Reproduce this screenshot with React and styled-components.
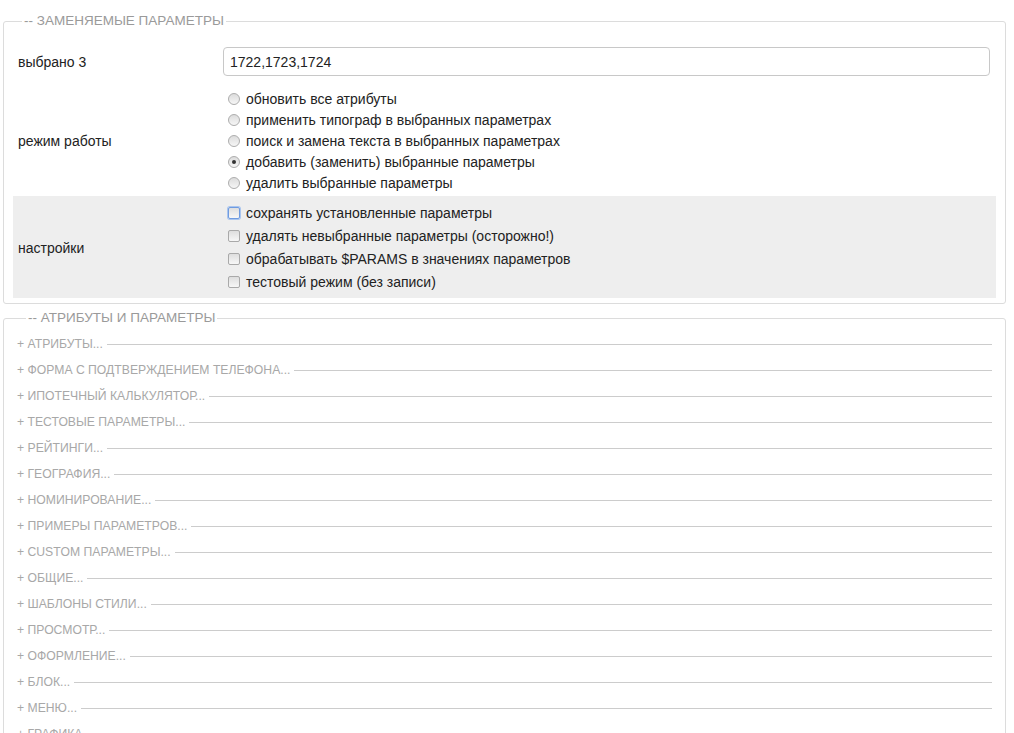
import React from 'react';
import styled, { createGlobalStyle } from 'styled-components';

const Global = createGlobalStyle`
  html, body { margin: 0; padding: 0; background: #fff; }
  body {
    font-family: "Liberation Sans", Arial, sans-serif;
    font-size: 14px;
    color: #222;
  }
`;

const Page = styled.div`
  padding: 13px 8px 0 3px;
  display: flex;
  flex-direction: column;
  gap: 6px;
`;

const Fieldset = styled.fieldset`
  margin: 0;
  border: 1px solid #dcdcdc;
  border-radius: 3px;
  padding: ${p => p.$pad};
  min-width: 0;
`;

const Legend = styled.legend`
  margin-left: 9px;
  padding: 0 2px;
  font-size: 13.5px;
  line-height: 16px;
  color: #9a9a9a;
  text-transform: uppercase;
`;

const Row = styled.div`
  display: grid;
  grid-template-columns: 210px 1fr;
  align-items: center;
  padding: ${p => p.$pad || '0'};
  background: ${p => (p.$shaded ? '#eeeeee' : 'transparent')};
`;

const Label = styled.div`
  padding-left: 5px;
`;

const TextInput = styled.input`
  box-sizing: border-box;
  width: 100%;
  height: 29px;
  border: 1px solid #c8c8c8;
  border-radius: 4px;
  padding: 0 6px;
  font: inherit;
  font-size: 14px;
  color: #222;
  outline: none;
`;

const OptionList = styled.div`
  display: flex;
  flex-direction: column;
  gap: ${p => p.$gap};
  padding-left: 5px;
`;

const Option = styled.label`
  display: flex;
  align-items: center;
  gap: 6px;
  line-height: 16px;
`;

const Radio = styled.span`
  box-sizing: border-box;
  width: 12px;
  height: 12px;
  border-radius: 50%;
  border: 1px solid #adadad;
  background: linear-gradient(#dcdcdc, #f6f6f6);
  display: flex;
  align-items: center;
  justify-content: center;
  flex: none;
  &::after {
    content: '';
    width: 4px;
    height: 4px;
    border-radius: 50%;
    background: #333;
    display: ${p => (p.$on ? 'block' : 'none')};
  }
`;

const Check = styled.span`
  box-sizing: border-box;
  width: 12px;
  height: 12px;
  border-radius: 2px;
  border: 1px solid ${p => (p.$focus ? '#6f9be0' : '#a9a9a9')};
  box-shadow: ${p => (p.$focus ? '0 0 0 1px #a9c5ef' : 'none')};
  background: linear-gradient(#dedede, #f7f7f7);
  flex: none;
`;

const Groups = styled.div`
  display: flex;
  flex-direction: column;
  padding-top: 5px;
`;

const Group = styled.div`
  height: 26px;
  display: flex;
  align-items: center;
  font-size: 12.2px;
  color: #a8a8a8;
  text-transform: uppercase;
  white-space: nowrap;
  &::after {
    content: '';
    flex: 1;
    margin-left: 4px;
    border-top: 1px solid #cccccc;
  }
`;

const modes = [
  'обновить все атрибуты',
  'применить типограф в выбранных параметрах',
  'поиск и замена текста в выбранных параметрах',
  'добавить (заменить) выбранные параметры',
  'удалить выбранные параметры',
];

const settings = [
  'сохранять установленные параметры',
  'удалять невыбранные параметры (осторожно!)',
  'обрабатывать $PARAMS в значениях параметров',
  'тестовый режим (без записи)',
];

const groups = [
  'атрибуты', 'форма с подтверждением телефона', 'ипотечный калькулятор',
  'тестовые параметры', 'рейтинги', 'география', 'номинирование',
  'примеры параметров', 'custom параметры', 'общие', 'шаблоны стили',
  'просмотр', 'оформление', 'блок', 'меню', 'графика',
];

export default function App() {
  return (
    <Page>
      <Global />
      <Fieldset $pad="18px 9px 5px 9px">
        <Legend>-- Заменяемые параметры</Legend>
        <Row $pad="0 6px 0 0">
          <Label>выбрано 3</Label>
          <TextInput defaultValue="1722,1723,1724" />
        </Row>
        <Row $pad="15px 0 5px">
          <Label>режим работы</Label>
          <OptionList $gap="5px">
            {modes.map((m, i) => (
              <Option key={m}><Radio $on={i === 3} />{m}</Option>
            ))}
          </OptionList>
        </Row>
        <Row $shaded $pad="9px 0 8px">
          <Label>настройки</Label>
          <OptionList $gap="7px">
            {settings.map((s, i) => (
              <Option key={s}><Check $focus={i === 0} />{s}</Option>
            ))}
          </OptionList>
        </Row>
      </Fieldset>
      <Fieldset $pad="0 13px 0 13px">
        <Legend>-- Атрибуты и параметры</Legend>
        <Groups>
          {groups.map(g => <Group key={g}>+ {g}...</Group>)}
        </Groups>
      </Fieldset>
    </Page>
  );
}
